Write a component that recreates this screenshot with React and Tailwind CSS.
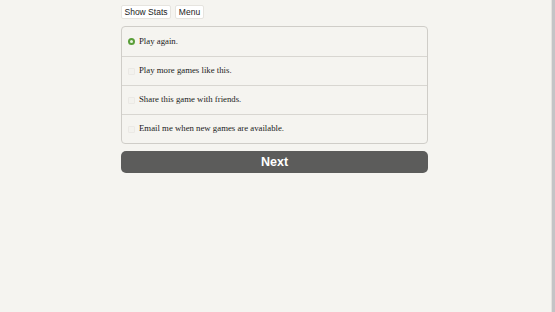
import React, { useState } from 'react';

const options = [
  'Play again.',
  'Play more games like this.',
  'Share this game with friends.',
  'Email me when new games are available.',
];

const App = () => {
  const [picked, setPicked] = useState(0);

  return (
    <div className="flex h-[312px] w-full bg-[#f5f4f0]">
      <div className="flex-1">
        <div className="ml-[121px] w-[307px] pt-[5px]">
          {/* Top buttons */}
          <div className="flex gap-[4px]">
            <button className="h-[14px] w-[50px] rounded-[2px] border border-[#e6e4df] bg-white text-[8.5px] leading-[12px] text-[#222] font-['Liberation_Sans',sans-serif]">
              Show Stats
            </button>
            <button className="h-[14px] w-[29px] rounded-[2px] border border-[#e6e4df] bg-white text-[8.5px] leading-[12px] text-[#222] font-['Liberation_Sans',sans-serif]">
              Menu
            </button>
          </div>

          {/* Options */}
          <div className="mt-[7px] overflow-hidden rounded-[4px] border border-[#cfcdc8] bg-[#f5f4f0]">
            {options.map((text, i) => (
              <div
                key={text}
                onClick={() => setPicked(i)}
                className={`flex h-[29px] items-center gap-[4px] pl-[6px] ${i > 0 ? 'border-t border-[#d8d6d1]' : ''}`}
              >
                {picked === i ? (
                  <span className="box-border h-[7px] w-[7px] rounded-full border-[2px] border-[#5a9e3a] bg-[#e8f2e0]" />
                ) : (
                  <span className="box-border h-[7px] w-[7px] rounded-[1px] border border-[#ebe9e5] bg-[#f3f2ee]" />
                )}
                <span className="text-[8.75px] text-[#222] font-['Liberation_Serif',serif]">{text}</span>
              </div>
            ))}
          </div>

          {/* Next */}
          <button className="mt-[7px] flex h-[22px] w-full items-center justify-center rounded-[5px] bg-[#5c5c5b] text-[12.5px] font-bold text-white font-['Liberation_Sans',sans-serif]">
            Next
          </button>
        </div>
      </div>
      <div className="w-[4px] border-l border-[#e4e3df] bg-[#c4c4c6]" />
    </div>
  );
};

export default App;
